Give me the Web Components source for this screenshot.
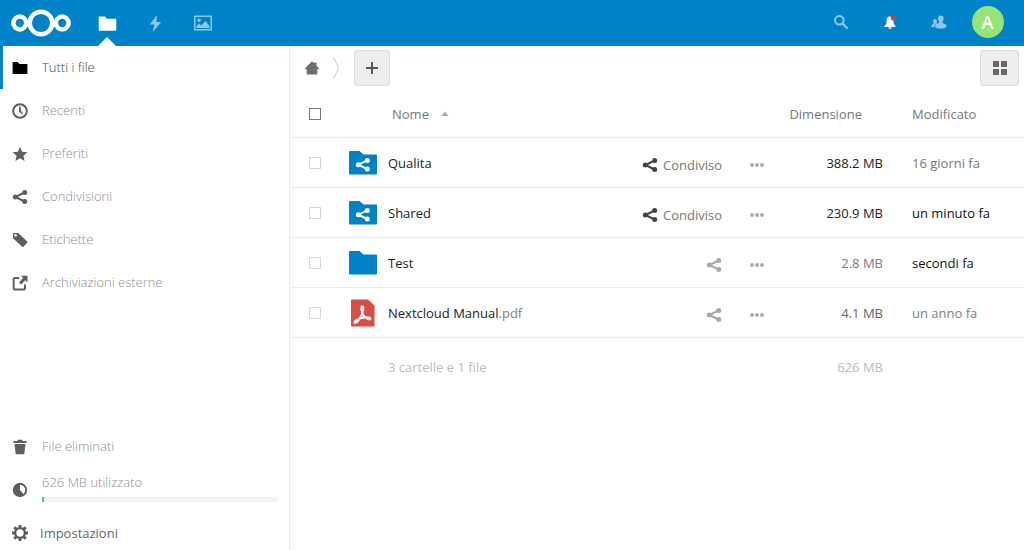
<!DOCTYPE html>
<html lang="it">
<head>
<meta charset="utf-8">
<meta name="viewport" content="width=device-width, initial-scale=1">
<title>File - Nextcloud</title>
<style>
  body {
    margin: 0;
    font-family: "Open Sans", "Noto Sans", sans-serif;
    font-size: 13px;
    line-height: 20px;
    color: #222;
    background: #fff;
    --brand: #0082c9;
    --line: #ebebeb;
  }
</style>
</head>
<body>
<app-shell>
  <app-header slot="header"></app-header>
  <app-nav slot="nav">
    <nav-entry icon="folder" active>Tutti i file</nav-entry>
    <nav-entry icon="clock">Recenti</nav-entry>
    <nav-entry icon="star">Preferiti</nav-entry>
    <nav-entry icon="share">Condivisioni</nav-entry>
    <nav-entry icon="tag">Etichette</nav-entry>
    <nav-entry icon="external">Archiviazioni esterne</nav-entry>
    <nav-entry slot="bottom" icon="trash">File eliminati</nav-entry>
    <quota-entry slot="bottom" value="1">626 MB utilizzato</quota-entry>
    <settings-entry slot="bottom">Impostazioni</settings-entry>
  </app-nav>
  <file-controls></file-controls>
  <file-list></file-list>
</app-shell>

<script>
const ICONS = {
  logo: ['0 0 60 30', '<g fill="none" stroke="#fff" stroke-width="4.500"><circle cx="30" cy="15" r="11.300"/><circle cx="8.800" cy="15" r="6.400"/><circle cx="51.200" cy="15" r="6.400"/></g>'],
  folder: ['0 0 16 16', '<path d="M1.200 2h4.600l1.600 2h7.400c.3 0 .6.300.6.600v8.800c0 .3-.3.600-.6.600H1.200c-.3 0-.6-.3-.6-.6V2.600c0-.3.300-.6.600-.6z"/>'],
  bolt: ['0 0 16 16', '<path d="M9.500 0 2.500 9h4.300L5.500 16 13.500 6.500H8.800z"/>'],
  image: ['0 0 18 16', '<path fill-rule="evenodd" d="M.8.5h16.400c.4 0 .8.300.8.800v13.400c0 .5-.4.800-.8.800H.8c-.4 0-.8-.3-.8-.8V1.300c0-.5.400-.8.800-.8zM1.500 2v12h15V2z"/><circle cx="5" cy="5.300" r="1.700"/><path d="M2.500 13v-2l2.500-2.500 2.200 2 4.300-4.500 4 5v2z"/>'],
  search: ['0 0 16 16', '<circle cx="6.300" cy="6.300" r="4.300" fill="none" stroke="currentColor" stroke-width="2"/><path d="m9.500 9.500 5 5" stroke="currentColor" stroke-width="2.400"/>'],
  bell: ['0 0 16 16', '<path d="M8 2.500C5.500 2.500 4.500 4.500 4.500 7v2.500L2.500 12v1h11v-1l-2-2.500V7c0-2.500-1-4.500-3.500-4.500zM6.300 13.300a1.700 1.700 0 0 0 3.400 0z"/><circle cx="11.200" cy="4" r="2.500" fill="#d2403a"/>'],
  contacts: ['0 0 16 16', '<path d="M9.800 1.500C8 1.500 7 2.800 7 4.300c0 1.300.5 2.200 1 3v1.400c-1.500 1-4 1.300-4 3.500 0 1.800 2 2.300 5.500 2.300s6-.5 6-2.300c0-2.200-2.400-2.500-3.900-3.500V7.300c.5-.8 1-1.700 1-3 0-1.500-1-2.800-2.800-2.800z"/><path d="M3.900 5c-1.200 0-1.900.8-1.900 1.900 0 .9.300 1.500.7 2v.9C1.700 10.700.3 11 .3 12.300c0 .7.800 1.200 2.700 1.200 0-2.500 1.500-3.400 3.200-4.300-.4-.7-.3-1.500-.4-2.300 0-1.100-.7-1.900-1.900-1.900z"/>'],
  clock: ['0 0 16 16', '<circle cx="8" cy="8" r="6.800" fill="none" stroke="currentColor" stroke-width="2"/><path d="M7 3.500h1.500l.5 4.200 1.900 2.700-.8.800L7 8.500z"/>'],
  star: ['0 0 16 16', '<path d="m8 .8 2.100 5 5.300.5-4 3.500 1.200 5.200L8 12.200 3.400 15l1.200-5.200-4-3.500 5.300-.5z"/>'],
  share: ['0 0 16 16', '<g fill="none" stroke="currentColor" stroke-width="2"><path d="M12.500 3.500 3.500 8l9 4.500"/></g><circle cx="12.700" cy="3.500" r="2.500"/><circle cx="3.300" cy="8" r="2.500"/><circle cx="12.700" cy="12.500" r="2.500"/>'],
  tag: ['0 0 16 16', '<path fill-rule="evenodd" d="M1.200 1h5l9 8.500c.4.400.4.900 0 1.300l-3.700 3.900c-.4.400-.9.400-1.300 0L1 6.200V1.200zm2.300 1a1.400 1.400 0 1 0 0 2.800 1.400 1.400 0 0 0 0-2.800z"/>'],
  external: ['0 0 16 16', '<path d="M7 3H3c-1 0-1.300.5-1.300 1.300v9c0 .8.500 1.200 1.300 1.200h8.700c.8 0 1.300-.4 1.300-1.200V9.500" fill="none" stroke="currentColor" stroke-width="2"/><path d="M9 .8h6.500v6.500L13.300 5.200 9 9.500 7 7.500l4.200-4.400z"/>'],
  trash: ['0 0 16 16', '<path d="M6 .8h4l.8 1.200H14.500v2h-13V2h3.700zM2.500 5h11l-1.200 10.300H3.700z"/>'],
  quota: ['0 0 16 16', '<circle cx="8" cy="8" r="6.200" fill="none" stroke="currentColor" stroke-width="2"/><path d="M8 2v6l3.800 4.500C7.500 15.500 2 12.500 2 8s3-6 6-6z"/>'],
  gear: ['0 0 16 16', '<circle cx="8" cy="8" r="4.900" fill="none" stroke="currentColor" stroke-width="2.400"/><g stroke="currentColor" stroke-width="3"><path d="M8 0v3M8 13v3M0 8h3M13 8h3M2.300 2.300l2.200 2.200M11.500 11.500l2.200 2.200M2.300 13.700l2.200-2.200M11.500 4.500l2.200-2.200"/></g>'],
  home: ['0 0 16 16', '<path d="M8 1.200.3 9h2.400v5.500h10.600V9h2.400L12.500 5.800V2.500h-2.200v1z"/>'],
  chevron: ['0 0 8 24', '<path d="m1.500 1 5 11-5 11" fill="none" stroke="#ccc"/>'],
  plus: ['0 0 12 12', '<path d="M6 0v12M0 6h12" stroke="currentColor" stroke-width="2"/>'],
  grid: ['0 0 14 14', '<path d="M0 0h6v6H0zM8 0h6v6H8zM0 8h6v6H0zM8 8h6v6H8z"/>'],
  more: ['0 0 14 4', '<circle cx="2" cy="2" r="1.900"/><circle cx="7" cy="2" r="1.900"/><circle cx="12" cy="2" r="1.900"/>'],
  sort: ['0 0 8 5', '<path d="M4 .5 7.500 5H.5z"/>'],
  dir: ['0 0 28 28', '<path fill="#0082c9" d="M1 2h9.500l4 3.500H27.300c.4 0 .7.300.7.700v18.600c0 .4-.3.700-.7.700H.7c-.4 0-.7-.3-.7-.7V3c0-.6.4-1 1-1z"/>'],
  dirShared: ['0 0 28 28', '<path fill="#0082c9" d="M1 2h9.500l4 3.500H27.300c.4 0 .7.300.7.700v18.600c0 .4-.3.700-.7.700H.7c-.4 0-.7-.3-.7-.7V3c0-.6.4-1 1-1z"/><path d="M18.300 11.400 9.300 15.700l9 4.300" fill="none" stroke="#fff" stroke-width="2"/><g fill="#fff"><circle cx="18.300" cy="11.400" r="2.500"/><circle cx="9.300" cy="15.700" r="2.500"/><circle cx="18.300" cy="20" r="2.500"/></g>'],
  pdf: ['0 0 28 28', '<path fill="#db4d47" d="M3 .5h16l6.500 6v20.300c0 .4-.3.700-.7.700H3c-.5 0-1-.4-1-1v-25c0-.6.500-1 1-1z"/><path d="M13 7.500c1.500-.5 1.800 2 .3 6.500C11.500 19 8 24.500 5.800 24c-2-1.500 3.500-4.500 8.200-5.300 4.500-.8 8 0 7.300 1.300-1 1.500-5-1-7-4-2-3.200-2.500-8-1.300-8.500z" fill="none" stroke="#fff" stroke-width="2"/>']
};

/* Base class: builds an open shadow root from a style and a markup string. */
class Base extends HTMLElement {
  connectedCallback() {
    if (this.shadowRoot) return;
    const t = document.createElement('template');
    t.innerHTML = `<style>*{box-sizing:border-box}${this.css()}</style>${this.html()}`;
    this.attachShadow({ mode: 'open' }).append(t.content.cloneNode(true));
  }
}

customElements.define('ui-icon', class extends Base {
  css() {
    const s = this.getAttribute('size') || '16';
    return `:host{display:inline-flex;flex:none} svg{display:block;height:${s}px;width:auto;fill:currentColor}`;
  }
  html() {
    const [box, body] = ICONS[this.getAttribute('name')];
    return `<svg viewBox="${box}" aria-hidden="true">${body}</svg>`;
  }
});

customElements.define('app-shell', class extends Base {
  css() {
    return `:host{display:grid;grid-template:auto 1fr / 290px minmax(0,1fr);min-height:100vh}
      .top{grid-column:1 / -1}
      aside{display:grid;border-right:1px solid var(--line)}`;
  }
  html() {
    return `<div class="top"><slot name="header"></slot></div>
      <aside><slot name="nav"></slot></aside><main><slot></slot></main>`;
  }
});

customElements.define('app-header', class extends Base {
  css() {
    return `:host{display:block}
      header{display:flex;justify-content:space-between;height:46px;padding:0 12px 0 11px;background:var(--brand);color:#fff}
      nav,.tools{display:flex}
      .logo{display:flex;align-items:center;width:72px}
      .app,.tool{display:flex;align-items:center;justify-content:center;color:#8cc6e9;position:relative}
      .app{width:48px}
      .tool{width:49px;border:0;padding:0 0 2px;background:none;font:inherit}
      .on{color:#fff}
      .app.on::after{content:"";position:absolute;bottom:0;left:calc(50% - 9px);border:9px solid transparent;border-top:0;border-bottom-color:#fff}
      .avatar{display:grid;place-items:center;width:32px;height:32px;border-radius:50%;background:#96e474;color:#fff;font-size:18px;font-weight:600}`;
  }
  html() {
    return `<header>
      <nav aria-label="Applicazioni">
        <a class="logo" href="#" aria-label="Nextcloud"><ui-icon name="logo" size="30"></ui-icon></a>
        <a class="app on" href="#" aria-label="File"><ui-icon name="folder" size="19"></ui-icon></a>
        <a class="app" href="#" aria-label="Attività"><ui-icon name="bolt" size="17"></ui-icon></a>
        <a class="app" href="#" aria-label="Galleria"><ui-icon name="image" size="16"></ui-icon></a>
      </nav>
      <div class="tools">
        <button class="tool" aria-label="Cerca"><ui-icon name="search" size="16"></ui-icon></button>
        <button class="tool on" aria-label="Notifiche"><ui-icon name="bell" size="16"></ui-icon></button>
        <button class="tool" aria-label="Contatti"><ui-icon name="contacts" size="16"></ui-icon></button>
        <button class="tool"><span class="avatar">A</span></button>
      </div></header>`;
  }
});

customElements.define('app-nav', class extends Base {
  css() {
    return `:host{display:grid}
      nav{display:flex;flex-direction:column;justify-content:space-between}`;
  }
  html() {
    return `<nav aria-label="File"><div><slot></slot></div><div><slot name="bottom"></slot></div></nav>`;
  }
});

customElements.define('nav-entry', class extends Base {
  css() {
    return `:host{display:block}
      a{display:flex;align-items:center;gap:14px;height:43px;padding-left:9px;border-left:3px solid transparent;color:#8e8e8e;font-weight:300;text-decoration:none}
      ui-icon{color:#5e5e5e}
      span{padding-bottom:2px}
      :host([active]) a{border-color:var(--brand);color:#444}
      :host([active]) ui-icon{color:#000}`;
  }
  html() {
    return `<a href="#"><ui-icon name="${this.getAttribute('icon')}"></ui-icon><span><slot></slot></span></a>`;
  }
});

customElements.define('quota-entry', class extends Base {
  css() {
    return `:host{display:block}
      .row{display:flex;align-items:center;gap:14px;height:43px;padding:0 11px 0 12px;color:#5e5e5e}
      label{display:flex;flex-direction:column;gap:5px;flex:1;padding-bottom:5px;color:#8e8e8e;font-weight:300}
      progress{appearance:none;display:block;width:100%;height:5px;border:0;background:#f3f3f3}
      progress::-webkit-progress-bar{background:#f3f3f3}
      progress::-webkit-progress-value{background:#5bb0de}`;
  }
  html() {
    return `<div class="row"><ui-icon name="quota"></ui-icon>
      <label><span><slot></slot></span><progress max="100" value="${this.getAttribute('value')}"></progress></label></div>`;
  }
});

customElements.define('settings-entry', class extends Base {
  css() {
    return `:host{display:block}
      button{display:flex;align-items:center;gap:12px;width:100%;height:39px;padding:4px 0 0 12px;border:0;background:none;color:#666;font:inherit;text-align:left}
      ui-icon{color:#5e5e5e}`;
  }
  html() { return `<button><ui-icon name="gear"></ui-icon><span><slot></slot></span></button>`; }
});

customElements.define('file-controls', class extends Base {
  css() {
    return `:host{display:block}
      .bar{display:flex;align-items:center;justify-content:space-between;height:44px;padding:0 5px 0 14px}
      .crumbs{display:flex;align-items:center;gap:12px;color:#6e6e6e}
      a{display:flex;color:inherit}
      .crumbs button{margin-left:2px}
      button{display:grid;place-items:center;height:36px;width:36px;padding:0;border:1px solid #dcdcdc;border-radius:3px;background:#ededed;color:#555}
      .view{width:39px;color:#666}`;
  }
  html() {
    return `<div class="bar"><div class="crumbs">
      <a href="#" aria-label="Home"><ui-icon name="home"></ui-icon></a>
      <ui-icon name="chevron" size="24"></ui-icon>
      <button aria-label="Nuovo"><ui-icon name="plus" size="12"></ui-icon></button></div>
      <button class="view" aria-label="Vista griglia"><ui-icon name="grid" size="14"></ui-icon></button></div>`;
  }
});

const FILES = [
  { name: 'Qualita', icon: 'dirShared', shared: true, size: '388.2 MB', sc: '#222', date: '16 giorni fa', dc: '#777' },
  { name: 'Shared', icon: 'dirShared', shared: true, size: '230.9 MB', sc: '#222', date: 'un minuto fa', dc: '#111' },
  { name: 'Test', icon: 'dir', size: '2.8 MB', sc: '#7c7c7c', date: 'secondi fa', dc: '#111' },
  { name: 'Nextcloud Manual', ext: '.pdf', icon: 'pdf', size: '4.1 MB', sc: '#666', date: 'un anno fa', dc: '#808080' }
];

customElements.define('file-list', class extends Base {
  css() {
    return `:host{display:block}
      table{width:100%;border-collapse:separate;border-spacing:0;table-layout:fixed}
      th,td{padding:0;height:50px;text-align:left;font-weight:400}
      thead th{height:48px;color:#777}
      thead th,tbody td{border-bottom:1px solid var(--line)}
      .check{width:50px}
      .size{width:115px;padding-right:15px;text-align:right}
      thead .size{padding-right:36px}
      .date{width:126px;padding-left:14px}
      .check input{appearance:none;display:block;width:12px;height:12px;margin:0 0 0 19px;border:1px solid #d8d8d8;background:#fff}
      thead .check input{border-color:#777}
      button{display:flex;align-items:center;padding:0;border:0;background:none;color:#a8a8a8;font:inherit}
      .sort{gap:12px;padding-left:52px;color:inherit}
      .sort ui-icon{color:#aaa}
      .cell{display:flex;align-items:center;padding:0 19px 0 9px}
      .cell a{display:flex;align-items:center;gap:11px;flex:1;color:#222;text-decoration:none}
      .ext{color:#808080}
      .acts{display:flex;align-items:center;gap:28px;padding-top:4px}
      .acts .shared{gap:5px;color:#777}
      .shared ui-icon{color:#444}
      tfoot td{height:58px;color:#bbb}
      .sum{padding-left:48px}`;
  }
  html() {
    const rows = FILES.map(f => `<tr>
      <td class="check"><input type="checkbox" aria-label="Seleziona ${f.name}"></td>
      <td><div class="cell"><a href="#"><ui-icon name="${f.icon}" size="28"></ui-icon><span>${f.name}${f.ext ? `<span class="ext">${f.ext}</span>` : ''}</span></a>
        <div class="acts"><button class="${f.shared ? 'shared' : ''}" aria-label="Condividi"><ui-icon name="share"></ui-icon>${f.shared ? '<span>Condiviso</span>' : ''}</button>
        <button aria-label="Azioni"><ui-icon name="more" size="4"></ui-icon></button></div></div></td>
      <td class="size" style="color:${f.sc}">${f.size}</td>
      <td class="date" style="color:${f.dc}">${f.date}</td></tr>`).join('');
    return `<table>
      <thead><tr><th class="check"><input type="checkbox" aria-label="Seleziona tutto"></th>
        <th><button class="sort">Nome<ui-icon name="sort" size="5"></ui-icon></button></th>
        <th class="size">Dimensione</th><th class="date">Modificato</th></tr></thead>
      <tbody>${rows}</tbody>
      <tfoot><tr><td></td><td class="sum">3 cartelle e 1 file</td><td class="size">626 MB</td><td></td></tr></tfoot>
    </table>`;
  }
});
</script>
</body>
</html>
